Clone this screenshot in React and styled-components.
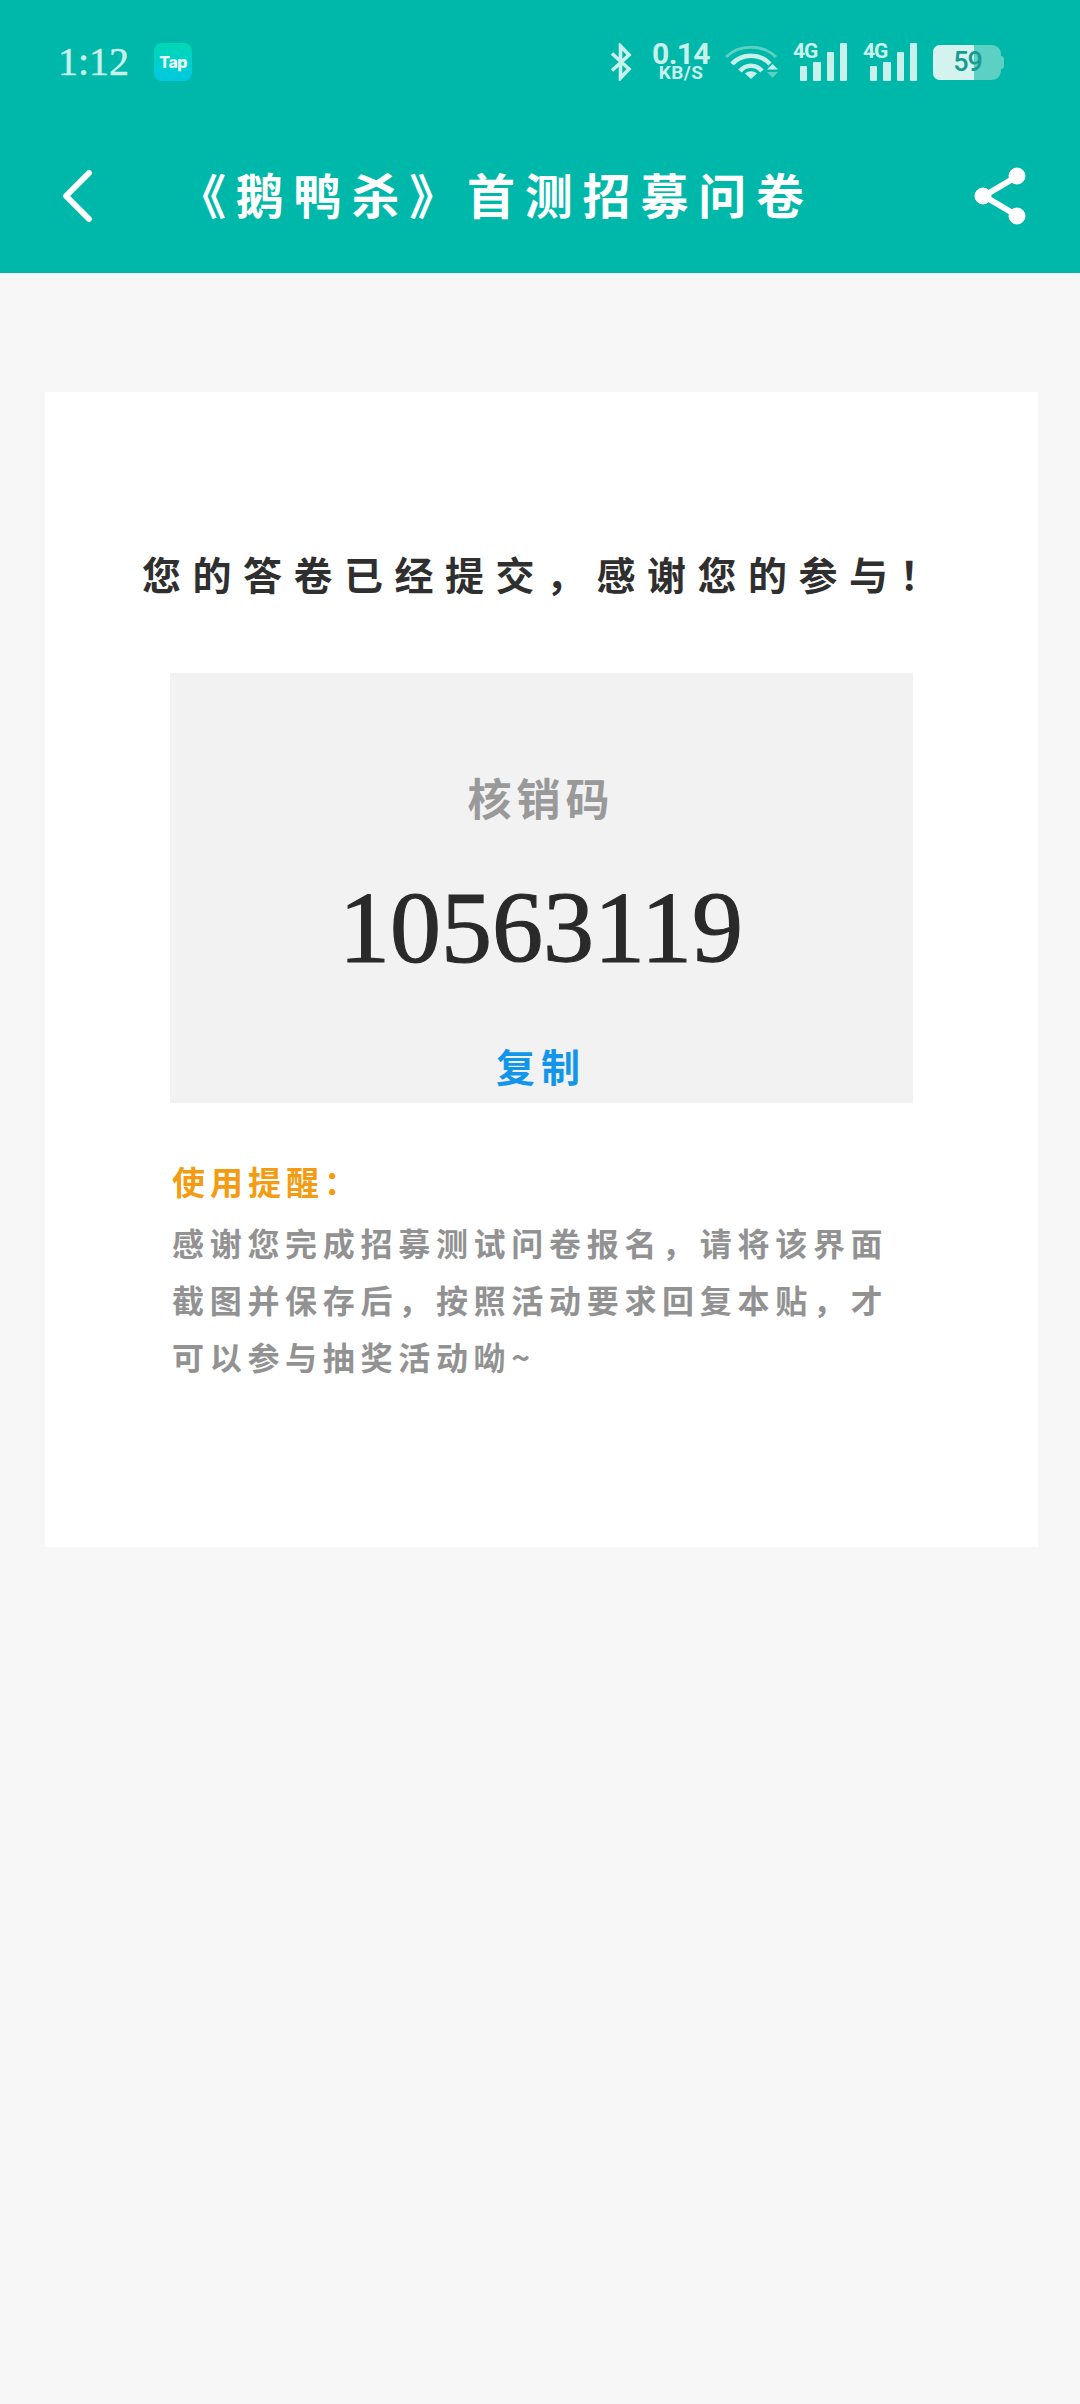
import React from "react";
import styled, { createGlobalStyle } from "styled-components";

const Global = createGlobalStyle`
  html, body { margin: 0; padding: 0; background: #f7f7f7; }
  * { box-sizing: border-box; }
`;
const cjk = `"Noto Sans CJK SC", "Noto Sans CJK TC", sans-serif`;

const Page = styled.div`width: 1080px; height: 2404px; background: #f7f7f7; overflow: hidden;`;
const Header = styled.header`height: 273px; background: #00b8a9; display: flex; flex-direction: column;`;
const StatusBar = styled.div`
  height: 124px; padding: 0 79px 0 58px; display: flex; align-items: center; justify-content: space-between;
`;
const StatusLeft = styled.div`display: flex; align-items: center; gap: 25px;`;
const Clock = styled.span`font: 40px/1 "Liberation Serif", serif; color: #c9f1eb; -webkit-text-stroke: 0.5px #c9f1eb;`;
const TapLogo = styled.div`
  width: 38px; height: 38px; border-radius: 8px; background: linear-gradient(180deg, #00d8b4, #00c8e0);
  display: flex; align-items: center; justify-content: center;
  font: 800 16px/1 "Inter", sans-serif; color: #e8fbf8; letter-spacing: -0.5px;
`;
const StatusRight = styled.div`display: flex; align-items: center;`;
const Speed = styled.div`
  width: 56px; margin: 0 16px 0 21px; display: flex; flex-direction: column; align-items: center; color: #c9f1eb;
  font-family: "Roboto", sans-serif; font-weight: 700;
`;
const SpeedValue = styled.span`font-size: 30px; line-height: 22px; letter-spacing: -0.6px; white-space: nowrap;`;
const SpeedUnit = styled.span`font-size: 19px; line-height: 16px; letter-spacing: 0.4px; white-space: nowrap;`;
const Signal = styled.div`position: relative; width: 54px; height: 38px; margin-left: ${p => p.$gap}px; flex: none;`;
const SignalLabel = styled.span`
  position: absolute; left: 0; top: -1px; font: 700 21px/19px "Roboto", sans-serif; color: #c9f1eb; letter-spacing: -1px;
`;
const Battery = styled.div`
  position: relative; width: 68px; height: 35px; margin-left: 16px; border-radius: 7px 9px 9px 7px;
  background: #5bd0c3; display: flex; align-items: center; justify-content: center;
  font: 500 27px/1 "Roboto", sans-serif; color: #169c90;
  &::after {
    content: ""; position: absolute; right: -3px; top: 11px; width: 3px; height: 13px; border-radius: 0 3px 3px 0; background: #5bd0c3;
  }
`;
const BatteryFill = styled.div`position: absolute; left: 0; top: 0; bottom: 0; border-radius: 7px 0 0 7px; background: #d4f3ef;`;
const BatteryText = styled.span`position: relative; margin-left: 1px; letter-spacing: -1px;`;

const NavBar = styled.div`
  flex: 1; display: flex; align-items: center; padding: 0 52px 6px 60px;
`;
const NavTitle = styled.h1`
  flex: 1; margin: 0 0 6px; padding-left: 84px; font: 700 48px/1 ${cjk}; letter-spacing: 9.8px; color: #fff; white-space: nowrap;
`;

const Card = styled.main`
  margin: 119px 42px 0 45px; height: 1155px; background: #fff; display: flex; flex-direction: column; align-items: center;
  padding-top: 152px;
`;
const Title = styled.h2`
  margin: 0; width: 100%; padding-left: 97px; font: 700 39px/58px ${cjk}; letter-spacing: 11.5px; color: #2f2f2f; white-space: nowrap;
`;
const CodeBox = styled.section`
  width: 743px; height: 430px; margin: 71px 0 0 -1px; background: #f2f2f2; display: flex; flex-direction: column; align-items: center;
  padding-top: 94px;
`;
const CodeLabel = styled.div`font: 700 44px/60px ${cjk}; letter-spacing: 5px; color: #999;`;
const CodeValue = styled.div`
  margin-top: 45px; font: 400 102px/112px "Liberation Serif", serif; color: #2a2a2a; -webkit-text-stroke: 1.2px #2a2a2a;
`;
const CopyLink = styled.div`margin-top: 55px; font: 700 39px/52px ${cjk}; letter-spacing: 6px; color: #1296ea;`;
const Notes = styled.section`width: 100%; padding: 55px 0 0 127px;`;
const NoteHead = styled.div`font: 700 33px/46px ${cjk}; letter-spacing: 5px; color: #f39c12;`;
const NoteBody = styled.p`
  margin: 10px 0 0; width: 740px; font: 700 32px/57px ${cjk}; letter-spacing: 5.7px; color: #929292;
`;

const Icon = styled.svg`display: block; flex: none;`;

const Bars = () => (
  <Icon width="54" height="38" viewBox="0 0 54 38" fill="#c9f1eb">
    <rect x="7" y="23" width="7" height="15" rx="1" />
    <rect x="20" y="19" width="8" height="19" rx="1" />
    <rect x="34" y="9" width="7" height="29" rx="1" />
    <rect x="47" y="0" width="7" height="38" rx="1" />
  </Icon>
);

export default function App() {
  return (
    <Page>
      <Global />
      <Header>
        <StatusBar>
          <StatusLeft>
            <Clock>1:12</Clock>
            <TapLogo>Tap</TapLogo>
          </StatusLeft>
          <StatusRight>
            <Icon width="22" height="38" viewBox="0 0 22 38" fill="none" stroke="#c9f1eb" strokeWidth="3.6">
              <path d="M2 10.5 19 26 10.5 35V3l8.5 9L2 27.5" />
            </Icon>
            <Speed>
              <SpeedValue>0.14</SpeedValue>
              <SpeedUnit>KB/S</SpeedUnit>
            </Speed>
            <Icon width="54" height="38" viewBox="0 0 54 38" fill="none">
              <path d="M1 14C14 1 38 1 51 14" stroke="#5bd0c3" strokeWidth="3" />
              <path d="M7 21C17 10 35 10 45 21" stroke="#c9f1eb" strokeWidth="4.5" />
              <path d="M15 28C21 21 31 21 37 28" stroke="#c9f1eb" strokeWidth="4.5" />
              <path d="M20 30.5 26 36l6-5.5C28.5 27.5 23.5 27.5 20 30.5Z" fill="#c9f1eb" />
              <path d="M42 26.5 47.5 21l5.5 5.5Z" fill="#c9f1eb" />
              <path d="M42 29h11l-5.5 6Z" fill="#5bd0c3" />
            </Icon>
            <Signal $gap={14}>
              <SignalLabel>4G</SignalLabel>
              <Bars />
            </Signal>
            <Signal $gap={16}>
              <SignalLabel>4G</SignalLabel>
              <Bars />
            </Signal>
            <Battery>
              <BatteryFill style={{ width: "60%" }} />
              <BatteryText>59</BatteryText>
            </Battery>
          </StatusRight>
        </StatusBar>
        <NavBar>
          <Icon width="34" height="54" viewBox="0 0 34 54" fill="none" stroke="#fff" strokeWidth="6" strokeLinecap="round" strokeLinejoin="round">
            <path d="M29 4 6 27l23 23" />
          </Icon>
          <NavTitle>《鹅鸭杀》首测招募问卷</NavTitle>
          <Icon width="56" height="60" viewBox="0 0 56 60" fill="#fff" stroke="#fff">
            <path d="M44 11 12 30l32 19" fill="none" strokeWidth="6" />
            <circle cx="45" cy="10" r="8" />
            <circle cx="11" cy="30" r="8" />
            <circle cx="45" cy="50" r="8" />
          </Icon>
        </NavBar>
      </Header>
      <Card>
        <Title>您的答卷已经提交，感谢您的参与！</Title>
        <CodeBox>
          <CodeLabel>核销码</CodeLabel>
          <CodeValue>10563119</CodeValue>
          <CopyLink>复制</CopyLink>
        </CodeBox>
        <Notes>
          <NoteHead>使用提醒：</NoteHead>
          <NoteBody>感谢您完成招募测试问卷报名，请将该界面截图并保存后，按照活动要求回复本贴，才可以参与抽奖活动呦~</NoteBody>
        </Notes>
      </Card>
    </Page>
  );
}
